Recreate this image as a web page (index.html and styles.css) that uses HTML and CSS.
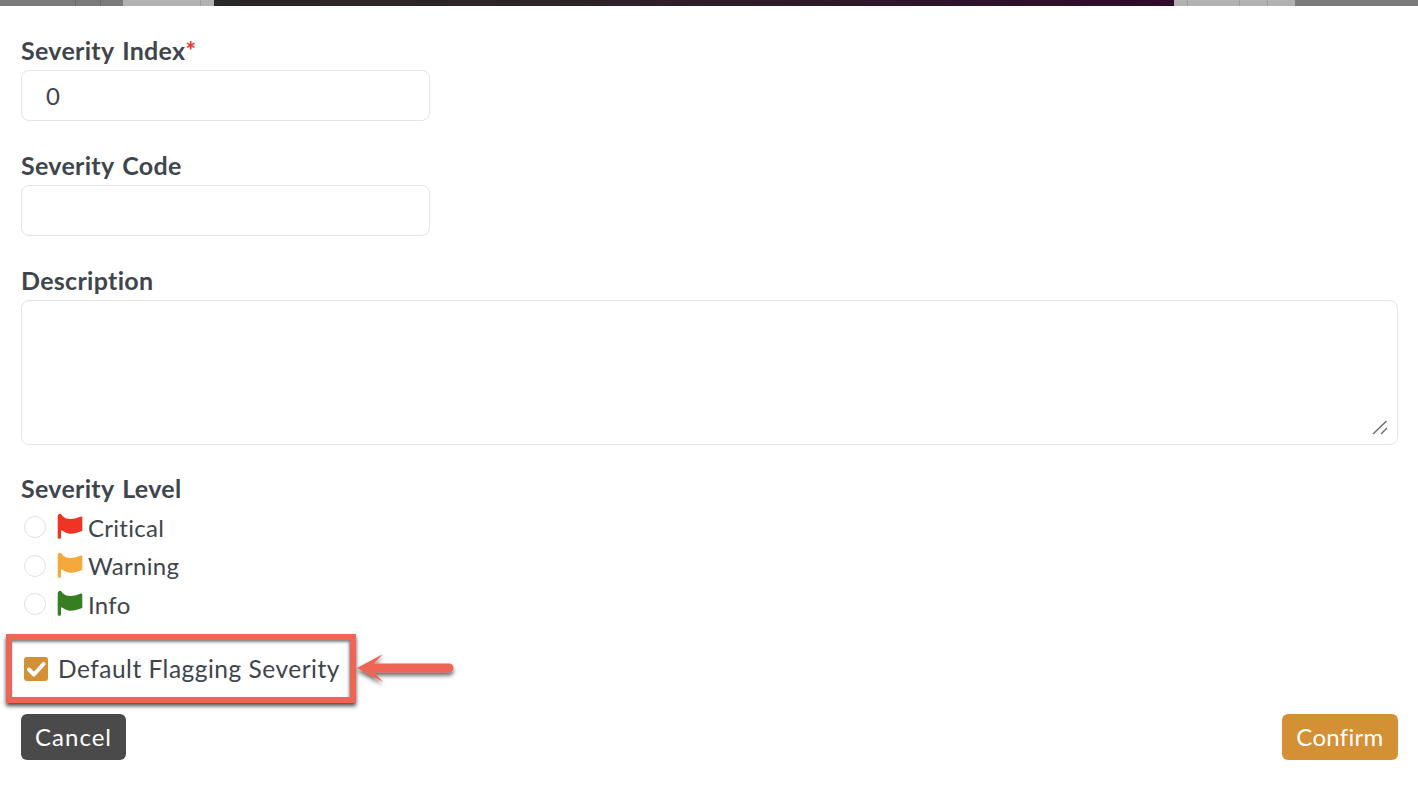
FILE: index.html
```html
<!DOCTYPE html>
<html lang="en">
<head>
    <meta charset="UTF-8">
    <title>Add Severity</title>
    <link rel="stylesheet" href="styles.css">
</head>
<body>

    <div class="backdrop">
        <div class="seg seg-a"></div>
        <div class="seg seg-b"></div>
        <div class="seg seg-c"></div>
        <div class="seg seg-d"></div>
        <div class="seg seg-e"></div>
        <div class="seg seg-dark"></div>
        <div class="seg seg-f"></div>
        <div class="seg seg-g"></div>
        <div class="seg seg-h"></div>
        <div class="seg seg-i"></div>
        <div class="seg seg-j"></div>
    </div>

    <form class="form">
        <div class="field">
            <label class="label">Severity Index<span class="required">*</span></label>
            <input class="input" type="text" value="0">
        </div>

        <div class="field">
            <label class="label">Severity Code</label>
            <input class="input" type="text">
        </div>

        <div class="field">
            <label class="label">Description</label>
            <div class="textarea-wrap">
                <textarea class="textarea"></textarea>
                <svg class="grip" viewBox="0 0 16 15" width="16" height="15"><path d="M1 14L14.500 1M9 14l6-6" fill="none" stroke="#666" stroke-width="1.300"/></svg>
            </div>
        </div>

        <div class="field field-level">
            <label class="label">Severity Level</label>
            <div class="radio-list">
                <div class="radio-row">
                    <span class="radio"></span>
                    <svg class="flag" viewBox="0 0 26 26"><path fill="#ee3524" d="M.7 3a2.200 2.200 0 0 1 4-1.200C5 3 8 6 13 6c4 0 8-1.500 11.300-2.600.5-.1 1 .2 1 .7v13.400c0 .4-.2.700-.6.800C21 19.500 17 20.800 13 20.700c-4-.1-6.500-2.700-9-3.500v7.300c0 1.800-3.300 1.800-3.300 0z"/></svg>
                    <span class="radio-text">Critical</span>
                </div>
                <div class="radio-row">
                    <span class="radio"></span>
                    <svg class="flag" viewBox="0 0 26 26"><path fill="#f5a83c" d="M.7 3a2.200 2.200 0 0 1 4-1.200C5 3 8 6 13 6c4 0 8-1.500 11.300-2.600.5-.1 1 .2 1 .7v13.400c0 .4-.2.700-.6.800C21 19.500 17 20.800 13 20.700c-4-.1-6.500-2.700-9-3.500v7.300c0 1.800-3.300 1.800-3.300 0z"/></svg>
                    <span class="radio-text">Warning</span>
                </div>
                <div class="radio-row">
                    <span class="radio"></span>
                    <svg class="flag" viewBox="0 0 26 26"><path fill="#377e22" d="M.7 3a2.200 2.200 0 0 1 4-1.200C5 3 8 6 13 6c4 0 8-1.500 11.300-2.600.5-.1 1 .2 1 .7v13.400c0 .4-.2.700-.6.800C21 19.500 17 20.800 13 20.700c-4-.1-6.500-2.700-9-3.500v7.300c0 1.800-3.300 1.800-3.300 0z"/></svg>
                    <span class="radio-text">Info</span>
                </div>
            </div>
        </div>

        <div class="default-row">
            <span class="checkbox">
                <svg viewBox="0 0 24 24"><path d="M5 12.500l5 5L19.500 7" fill="none" stroke="#fff" stroke-width="4" stroke-linecap="round" stroke-linejoin="round"/></svg>
            </span>
            <span class="default-text">Default Flagging Severity</span>
        </div>

        <div class="actions">
            <button class="button button-cancel" type="button">Cancel</button>
            <button class="button button-confirm" type="button">Confirm</button>
        </div>
    </form>

    <!-- annotation drawn over the screenshot -->
    <div class="callout"></div>
    <svg class="arrow" viewBox="0 0 110 50" width="110" height="50">
        <defs>
            <filter id="arrow-shadow" x="-20%" y="-40%" width="140%" height="200%">
                <feDropShadow dx="0" dy="3" stdDeviation="2" flood-color="#000" flood-opacity="0.6"/>
            </filter>
        </defs>
        <path filter="url(#arrow-shadow)" fill="#ee6555" d="M1 25 L27 11 L18 20.500 L93 20.500 a4.500 4.500 0 0 1 0 9 L18 29.500 L27 39 z"/>
    </svg>

</body>
</html>
```

FILE: styles.css
```css
html, body {
    margin: 0;
    padding: 0;
    background: #fff;
}
body {
    font-family: "Lato", "Liberation Sans", sans-serif;
    color: #3e454c;
    height: 786px;
    overflow: hidden;
    position: relative;
}

/* strip of the page behind the modal */
.backdrop {
    display: flex;
    height: 6px;
}
.seg {
    height: 100%;
}
.seg-a { width: 75px; background: #7b7b7b; border-right: 1px solid #6a6a6a; }
.seg-b { width: 24px; background: #7b7b7b; border-right: 1px solid #6a6a6a; }
.seg-c { width: 22px; background: #7b7b7b; }
.seg-d { width: 77px; background: #b1b1b1; border-right: 1px solid #9c9c9c; }
.seg-e { width: 13px; background: #b1b1b1; }
.seg-dark { width: 960px; background: linear-gradient(90deg, #2b2829 0%, #2e2429 35%, #300a2b 100%); }
.seg-f { width: 13px; background: #b1b1b1; border-right: 1px solid #9c9c9c; }
.seg-g { width: 51px; background: #b1b1b1; border-right: 1px solid #9c9c9c; }
.seg-h { width: 27px; background: #b1b1b1; border-right: 1px solid #9c9c9c; }
.seg-i { width: 27px; background: #b1b1b1; }
.seg-j { flex: 1; background: #7b7b7b; }

.form {
    padding: 0 20px 0 21px;
}
.field {
    display: flex;
    flex-direction: column;
    padding-top: 31px;
}
.field-level {
    padding-top: 30px;
}

.label {
    font-size: 25px;
    font-weight: 700;
    line-height: 26px;
    height: 26px;
    margin-bottom: 7px;
    letter-spacing: 0.3px;
    word-spacing: 2px;
}
.required {
    color: #ee3524;
}
.input {
    width: 409px;
    height: 51px;
    box-sizing: border-box;
    border: 1px solid #e4e4e4;
    border-radius: 8px;
    padding: 0 24px;
    font-family: inherit;
    font-size: 24px;
    color: #3e454c;
    outline: none;
}
.textarea-wrap {
    position: relative;
}
.textarea {
    display: block;
    width: 100%;
    height: 145px;
    box-sizing: border-box;
    border: 1px solid #e4e4e4;
    border-radius: 8px;
    outline: none;
    resize: none;
}
.grip {
    position: absolute;
    right: 10px;
    bottom: 10px;
}

.radio-list {
    display: flex;
    flex-direction: column;
}
.radio-row {
    display: flex;
    align-items: center;
    height: 38.5px;
    padding-left: 3px;
}
.radio {
    width: 22px;
    height: 22px;
    box-sizing: border-box;
    border: 1px solid #e2e2e2;
    border-radius: 50%;
    margin-right: 11px;
}
.flag {
    width: 26px;
    height: 26px;
    margin-right: 5px;
    margin-top: -2px;
}
.radio-text {
    font-size: 24px;
    letter-spacing: 0.3px;
}

.default-row {
    display: flex;
    align-items: center;
    height: 38px;
    margin-top: 26.5px;
    padding-left: 3px;
}
.checkbox {
    width: 24px;
    height: 24px;
    border-radius: 3px;
    background: #d39035;
    margin-right: 10px;
    display: flex;
}
.default-text {
    font-size: 24.5px;
    letter-spacing: 0.5px;
    margin-top: -2px;
}

.actions {
    display: flex;
    justify-content: space-between;
    margin-top: 26px;
}
.button {
    height: 46px;
    border: none;
    border-radius: 6px;
    color: #fff;
    font-family: inherit;
    font-size: 24px;
    padding: 0 0 2px;
    letter-spacing: 0.3px;
}
.button-cancel {
    width: 105px;
    background: #4a4a4a;
    letter-spacing: 1px;
}
.button-confirm {
    width: 116px;
    background: #d39035;
}

.callout {
    position: absolute;
    left: 6px;
    top: 634px;
    width: 350px;
    height: 69px;
    box-sizing: border-box;
    border: 6px solid #ee6555;
    box-shadow: 0 3px 4px rgba(0, 0, 0, 0.7), inset -1px 2px 3px rgba(0, 0, 0, 0.5);
}
.arrow {
    position: absolute;
    left: 356px;
    top: 643px;
}
```
